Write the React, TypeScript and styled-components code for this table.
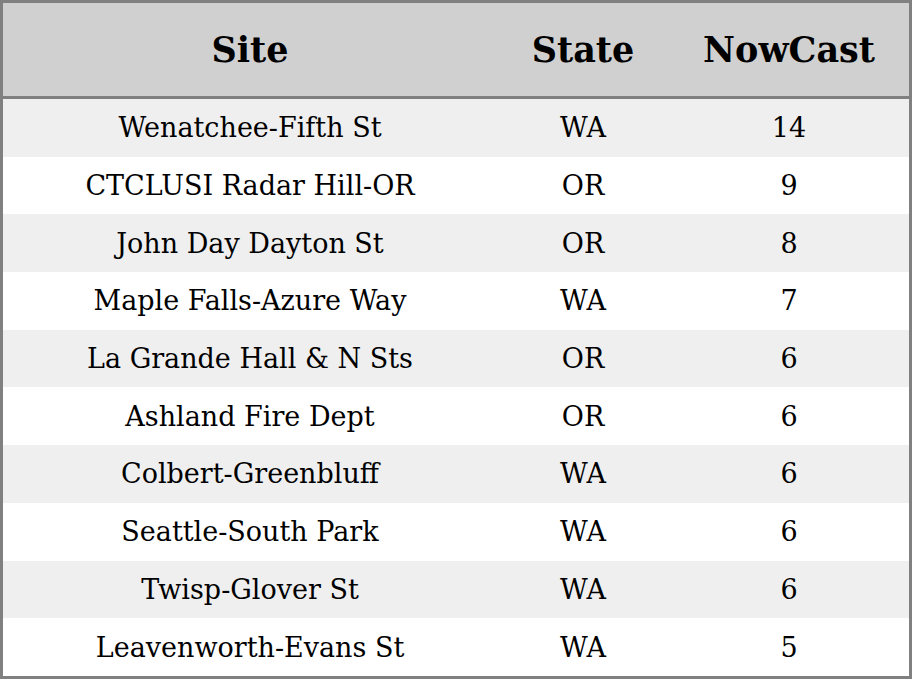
import React from "react";
import styled, { createGlobalStyle } from "styled-components";

const Global = createGlobalStyle`
  html, body { margin: 0; padding: 0; background: #ffffff; }
  body { font-family: "DejaVu Serif", serif; }
`;

const Table = styled.table`
  width: 912px;
  height: 679px;
  border-collapse: separate;
  border-spacing: 0;
  border: 3px solid #808080;
  box-sizing: border-box;
  font-family: "DejaVu Serif", serif;
  color: #000;
  table-layout: fixed;
`;

const HeadCell = styled.th<{ $w: number }>`
  width: ${(p) => p.$w}px;
  height: 93px;
  padding: 0;
  background: #d0d0d0;
  border-bottom: 3px solid #808080;
  font-size: 35px;
  font-weight: bold;
  text-align: center;
  vertical-align: middle;
`;

const Row = styled.tr<{ $alt: boolean }>`
  background: ${(p) => (p.$alt ? "#efefef" : "#ffffff")};
`;

const Cell = styled.td`
  padding: 0;
  height: 57.7px;
  font-size: 27px;
  text-align: center;
  vertical-align: middle;
`;

const rows: [string, string, string][] = [
  ["Wenatchee-Fifth St", "WA", "14"],
  ["CTCLUSI Radar Hill-OR", "OR", "9"],
  ["John Day Dayton St", "OR", "8"],
  ["Maple Falls-Azure Way", "WA", "7"],
  ["La Grande Hall & N Sts", "OR", "6"],
  ["Ashland Fire Dept", "OR", "6"],
  ["Colbert-Greenbluff", "WA", "6"],
  ["Seattle-South Park", "WA", "6"],
  ["Twisp-Glover St", "WA", "6"],
  ["Leavenworth-Evans St", "WA", "5"],
];

export default function App() {
  return (
    <>
      <Global />
      <Table>
        <thead>
          <tr>
            <HeadCell $w={494}>Site</HeadCell>
            <HeadCell $w={172}>State</HeadCell>
            <HeadCell $w={240}>NowCast</HeadCell>
          </tr>
        </thead>
        <tbody>
          {rows.map((r, i) => (
            <Row key={i} $alt={i % 2 === 0}>
              <Cell>{r[0]}</Cell>
              <Cell>{r[1]}</Cell>
              <Cell>{r[2]}</Cell>
            </Row>
          ))}
        </tbody>
      </Table>
    </>
  );
}
